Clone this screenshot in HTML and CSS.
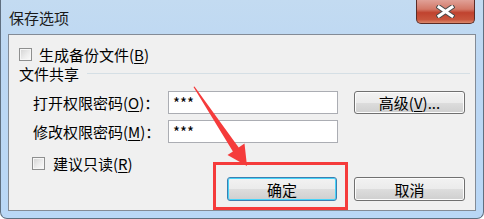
FILE: index.html
```html
<!DOCTYPE html>
<html lang="zh-CN">
<head>
    <meta charset="UTF-8">
    <title>保存选项</title>
    <link rel="stylesheet" href="styles.css">
</head>
<body>
    <div class="window">
        <div class="titlebar">
            <span class="title">保存选项</span>
            <div class="close-btn">
                <svg width="19" height="13" viewBox="0 0 19 13">
                    <path d="M3 2 L16 11 M16 2 L3 11" stroke="#4a4a4a" stroke-width="5" stroke-linecap="square"/>
                    <path d="M3 2 L16 11 M16 2 L3 11" stroke="#ffffff" stroke-width="3" stroke-linecap="square"/>
                </svg>
            </div>
        </div>

        <div class="client">
            <div class="check-row first">
                <span class="checkbox"></span>
                <span>生成备份文件(<u>B</u>)</span>
            </div>

            <div class="group-head">
                <span>文件共享</span>
                <div class="group-line"></div>
            </div>

            <div class="pw-row">
                <span class="pw-label">打开权限密码(<u>O</u>)：</span>
                <div class="text-input">***</div>
                <button class="btn">高级(<u>V</u>)...</button>
            </div>
            <div class="pw-row second">
                <span class="pw-label">修改权限密码(<u>M</u>)：</span>
                <div class="text-input">***</div>
            </div>

            <div class="check-row readonly">
                <span class="checkbox"></span>
                <span>建议只读(<u>R</u>)</span>
            </div>

            <div class="button-row">
                <button class="btn btn-default">确定</button>
                <button class="btn">取消</button>
            </div>
        </div>

        <!-- annotation drawn over the dialog -->
        <div class="highlight-box"></div>
        <svg class="arrow" width="484" height="219" viewBox="0 0 484 219">
            <polygon points="193.5,87 194.5,86.6 238.7,147.4 244.5,143.5 247,166 227.5,155 232.9,151.4" fill="#f53b3b"/>
        </svg>
    </div>
</body>
</html>
```

FILE: styles.css
```css
* {
    box-sizing: border-box;
    margin: 0;
    padding: 0;
}

body {
    width: 484px;
    height: 219px;
    overflow: hidden;
    font-family: "Noto Sans CJK SC", "Liberation Sans", sans-serif;
    font-size: 15px;
    color: #000;
    background: #ffffff;
}

u {
    text-decoration: underline;
    text-underline-offset: 2px;
}

.window {
    position: relative;
    width: 484px;
    height: 219px;
    background: linear-gradient(to bottom, #c3dbf1 0%, #bcd7f3 30%, #b9d7f6 100%);
    border: 1px solid #5f6f80;
    border-top: none;
    border-radius: 0 0 7px 7px;
    padding: 0 7px 7px 7px;
}

.titlebar {
    height: 34px;
    display: flex;
    justify-content: space-between;
    align-items: flex-start;
}

.title {
    margin-top: 9px;
    margin-left: 1px;
    font-size: 15px;
    line-height: 18px;
    color: #1a1a1a;
}

.close-btn {
    width: 59px;
    height: 24px;
    margin-right: 1px;
    border: 1px solid #5b2c26;
    border-top: none;
    border-radius: 0 0 5px 5px;
    background: linear-gradient(to bottom, #e0a197 0%, #d37867 40%, #c0432f 55%, #c8553d 85%, #dc8a6e 100%);
    display: flex;
    align-items: center;
    justify-content: center;
}

.client {
    height: 177px;
    background: #f0f0f0;
    border: 1px solid #838b96;
    padding: 9px 5px 0 0;
}

.check-row {
    display: flex;
    align-items: center;
    height: 20px;
}

.check-row.first {
    padding-left: 10px;
    gap: 7px;
}

.check-row.readonly {
    margin-top: 10px;
    padding-left: 23px;
    gap: 8px;
}

.checkbox {
    display: block;
    flex: 0 0 13px;
    width: 13px;
    height: 13px;
    border: 1px solid #8e8f8f;
    background: linear-gradient(135deg, #d2d2d2 0%, #ececec 55%, #fbfbfb 100%);
    box-shadow: inset 0 0 0 1px #f6f6f6;
}

.group-head {
    display: flex;
    align-items: center;
    height: 18px;
    padding-left: 10px;
    gap: 8px;
}

.group-line {
    flex: 1;
    height: 1px;
    background: #d5dfe5;
}

.pw-row {
    display: flex;
    align-items: center;
    height: 23px;
    margin-top: 9px;
    padding-left: 24px;
}

.pw-row.second {
    margin-top: 6px;
}

.pw-label {
    width: 135px;
}

.text-input {
    width: 170px;
    height: 23px;
    background: #fff;
    border: 1px solid #abadb3;
    padding-left: 4px;
    line-height: 21px;
    font-size: 15px;
}

.btn {
    width: 111px;
    height: 23px;
    margin-left: 16px;
    border: 1px solid #707070;
    border-radius: 3px;
    background: linear-gradient(to bottom, #f2f2f2 0%, #ebebeb 50%, #dddddd 51%, #cfcfcf 100%);
    box-shadow: inset 0 0 0 1px #fcfcfc;
    font-family: inherit;
    font-size: 15px;
    font-weight: 400;
    color: #000;
    line-height: 21px;
}

.button-row {
    display: flex;
    height: 24px;
    margin-top: 4px;
    padding-left: 218px;
}

.button-row .btn {
    height: 24px;
}

.button-row .btn-default {
    width: 110px;
    margin-left: 0;
    border-color: #3c7fb1;
    box-shadow: inset 0 0 0 1px #48d3f8;
}

.button-row .btn + .btn {
    margin-left: 17px;
}

.highlight-box {
    position: absolute;
    left: 212px;
    top: 162px;
    width: 135px;
    height: 48px;
    border: 3px solid #f53b3b;
}

.arrow {
    position: absolute;
    left: -1px;
    top: 0;
    pointer-events: none;
}
```
